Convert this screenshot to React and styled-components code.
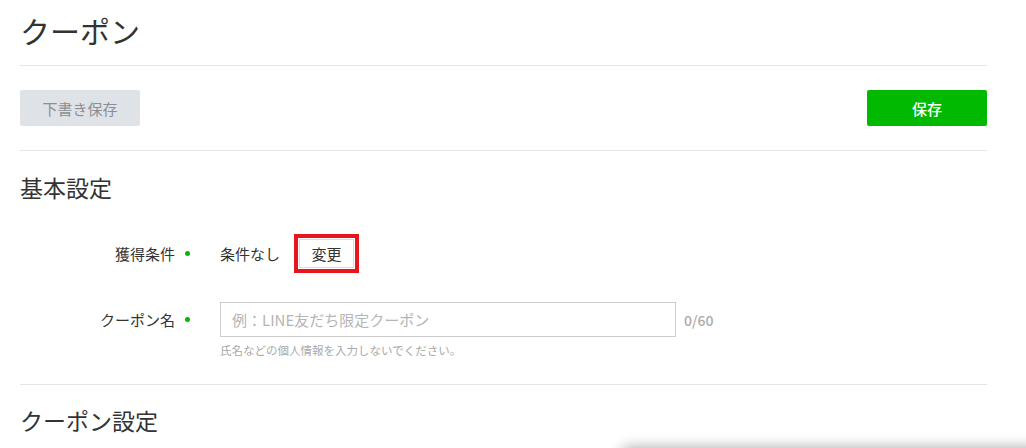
import styled, { createGlobalStyle } from "styled-components";

const GlobalStyle = createGlobalStyle`
  body {
    margin: 0;
    background: #fff;
    font-family: "Noto Sans CJK JP", "Liberation Sans", sans-serif;
    color: #333;
    overflow: hidden;
  }
`;

const Page = styled.div`
  width: 967px;
  padding-left: 20px;
`;
const Header = styled.h1`
  margin: 0;
  height: 65px;
  line-height: 60px;
  font-size: 30px;
  font-weight: 400;
  color: #333;
  border-bottom: 1px solid #e5e5e5;
`;
const Toolbar = styled.div`
  display: flex;
  justify-content: space-between;
  padding: 24px 0;
  border-bottom: 1px solid #e5e5e5;
`;
const Button = styled.button`
  width: 120px;
  height: 36px;
  border: none;
  border-radius: 2px;
  font-family: inherit;
  font-size: 15px;
  font-weight: ${(p) => (p.$primary ? 500 : 400)};
  background: ${(p) => (p.$primary ? "#00b900" : "#dfe2e6")};
  color: ${(p) => (p.$primary ? "#fff" : "#8a8f96")};
  cursor: pointer;
`;
const Section = styled.section`
  padding-bottom: ${(p) => (p.$last ? "0" : "26px")};
  border-bottom: ${(p) => (p.$last ? "none" : "1px solid #e5e5e5")};
`;
const SectionTitle = styled.h2`
  margin: ${(p) => (p.$tight ? "20px" : "21px")} 0 0;
  font-size: 23px;
  line-height: 30px;
  font-weight: 400;
  color: #333;
`;
const Row = styled.div`
  display: grid;
  grid-template-columns: 170px 1fr;
  column-gap: 30px;
  align-items: start;
  margin-top: ${(p) => p.$gap}px;
`;
const Label = styled.div`
  display: flex;
  justify-content: flex-end;
  align-items: center;
  gap: 10px;
  height: ${(p) => p.$h}px;
  font-size: 15px;
  color: #333;
`;
const Dot = styled.span`
  width: 5px;
  height: 5px;
  border-radius: 50%;
  background: #00b900;
`;
const Value = styled.div`
  display: flex;
  align-items: center;
  gap: 14px;
  height: 40px;
  font-size: 15px;
`;
const Highlight = styled.span`
  display: inline-flex;
  border: 4px solid #e8141e;
  padding: 1px;
`;
const SmallButton = styled.button`
  width: 55px;
  height: 29px;
  border: 1px solid #ddd;
  background: #fff;
  font-family: inherit;
  font-size: 15px;
  color: #333;
  padding: 0;
`;
const InputLine = styled.div`
  display: flex;
  align-items: center;
  gap: 8px;
`;
const Input = styled.input`
  box-sizing: border-box;
  width: 456px;
  height: 35px;
  border: 1px solid #ccc;
  padding: 0 11px;
  font-family: inherit;
  font-size: 15px;
  color: #333;
  outline: none;
  &::placeholder {
    color: #b5b5b5;
  }
`;
const Counter = styled.span`
  font-size: 14px;
  font-weight: 500;
  color: #aaa;
`;
const Help = styled.div`
  margin-top: 5px;
  font-size: 11.5px;
  line-height: 16px;
  color: #aaa;
`;
const FloatingPanel = styled.div`
  position: fixed;
  left: 622px;
  top: 449px;
  width: 420px;
  height: 60px;
  background: #fff;
  border-radius: 6px;
  box-shadow: 0 -2px 14px rgba(0, 0, 0, 0.32);
`;

export default function App() {
  return (
    <>
      <GlobalStyle />
      <Page>
        <Header>クーポン</Header>
        <Toolbar>
          <Button>下書き保存</Button>
          <Button $primary>保存</Button>
        </Toolbar>
        <Section>
          <SectionTitle>基本設定</SectionTitle>
          <Row $gap={31}>
            <Label $h={40}>
              獲得条件
              <Dot />
            </Label>
            <Value>
              <span>条件なし</span>
              <Highlight>
                <SmallButton>変更</SmallButton>
              </Highlight>
            </Value>
          </Row>
          <Row $gap={29}>
            <Label $h={35}>
              クーポン名
              <Dot />
            </Label>
            <div>
              <InputLine>
                <Input placeholder="例：LINE友だち限定クーポン" />
                <Counter>0/60</Counter>
              </InputLine>
              <Help>氏名などの個人情報を入力しないでください。</Help>
            </div>
          </Row>
        </Section>
        <Section $last>
          <SectionTitle $tight>クーポン設定</SectionTitle>
        </Section>
      </Page>
      <FloatingPanel />
    </>
  );
}
